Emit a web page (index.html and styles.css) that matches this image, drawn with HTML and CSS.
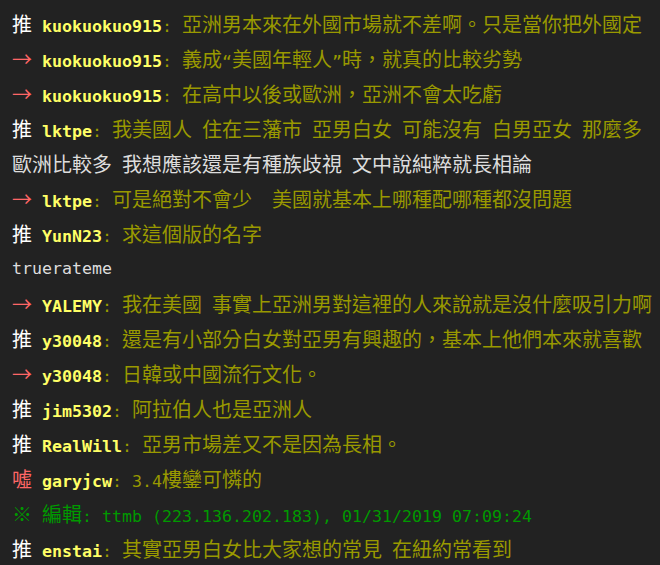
FILE: index.html
```html
<!DOCTYPE html>
<html lang="zh-Hant">
<head>
  <meta charset="UTF-8">
  <title>推文</title>
  <link rel="stylesheet" href="styles.css">
</head>
<body>
  <div class="comments">
    <div class="row"><span class="tag push c">推</span> <span class="user">kuokuokuo915</span><span class="msg">: <span class="c">亞洲男本來在外國市場就不差啊。只是當你把外國定</span></span></div>
    <div class="row"><span class="tag arrow c">→</span> <span class="user">kuokuokuo915</span><span class="msg">: <span class="c">義成</span>“<span class="c">美國年輕人</span>”<span class="c">時，就真的比較劣勢</span></span></div>
    <div class="row"><span class="tag arrow c">→</span> <span class="user">kuokuokuo915</span><span class="msg">: <span class="c">在高中以後或歐洲，亞洲不會太吃虧</span></span></div>
    <div class="row"><span class="tag push c">推</span> <span class="user">lktpe</span><span class="msg">: <span class="c">我美國人</span> <span class="c">住在三藩市</span> <span class="c">亞男白女</span> <span class="c">可能沒有</span> <span class="c">白男亞女</span> <span class="c">那麼多</span></span></div>
    <div class="row plain"><span class="c">歐洲比較多</span> <span class="c">我想應該還是有種族歧視</span> <span class="c">文中說純粹就長相論</span></div>
    <div class="row"><span class="tag arrow c">→</span> <span class="user">lktpe</span><span class="msg">: <span class="c">可是絕對不會少</span>  <span class="c">美國就基本上哪種配哪種都沒問題</span></span></div>
    <div class="row"><span class="tag push c">推</span> <span class="user">YunN23</span><span class="msg">: <span class="c">求這個版的名字</span></span></div>
    <div class="row plain">truerateme</div>
    <div class="row"><span class="tag arrow c">→</span> <span class="user">YALEMY</span><span class="msg">: <span class="c">我在美國</span> <span class="c">事實上亞洲男對這裡的人來說就是沒什麼吸引力啊</span></span></div>
    <div class="row"><span class="tag push c">推</span> <span class="user">y30048</span><span class="msg">: <span class="c">還是有小部分白女對亞男有興趣的，基本上他們本來就喜歡</span></span></div>
    <div class="row"><span class="tag arrow c">→</span> <span class="user">y30048</span><span class="msg">: <span class="c">日韓或中國流行文化。</span></span></div>
    <div class="row"><span class="tag push c">推</span> <span class="user">jim5302</span><span class="msg">: <span class="c">阿拉伯人也是亞洲人</span></span></div>
    <div class="row"><span class="tag push c">推</span> <span class="user">RealWill</span><span class="msg">: <span class="c">亞男市場差又不是因為長相。</span></span></div>
    <div class="row"><span class="tag boo c">噓</span> <span class="user">garyjcw</span><span class="msg">: 3.4<span class="c">樓鑾可憐的</span></span></div>
    <div class="row edit"><span class="c">※</span> <span class="c">編輯</span>: ttmb (223.136.202.183), 01/31/2019 07:09:24</div>
    <div class="row"><span class="tag push c">推</span> <span class="user">enstai</span><span class="msg">: <span class="c">其實亞男白女比大家想的常見</span> <span class="c">在紐約常看到</span></span></div>
  </div>
</body>
</html>
```

FILE: styles.css
```css
* {
  margin: 0;
  padding: 0;
  box-sizing: border-box;
}

body {
  background: #222222;
  min-height: 100vh;
}

.comments {
  padding: 6px 0 0 12px;
}

.row {
  height: 35px;
  line-height: 35px;
  white-space: pre;
  font-family: "DejaVu Sans Mono", monospace;
  font-size: 16.61px;
  color: #999900;
}

.c {
  font-family: "Noto Sans CJK TC", sans-serif;
  font-size: 20px;
}

.tag.push { color: #ffffff; }
.tag.arrow { color: #ff6666; }
.tag.boo { color: #ff6666; }

.user {
  color: #ffff66;
  font-weight: bold;
}

.msg { color: #999900; }

.plain { color: #dddddd; }

.edit { color: #009900; }
```
